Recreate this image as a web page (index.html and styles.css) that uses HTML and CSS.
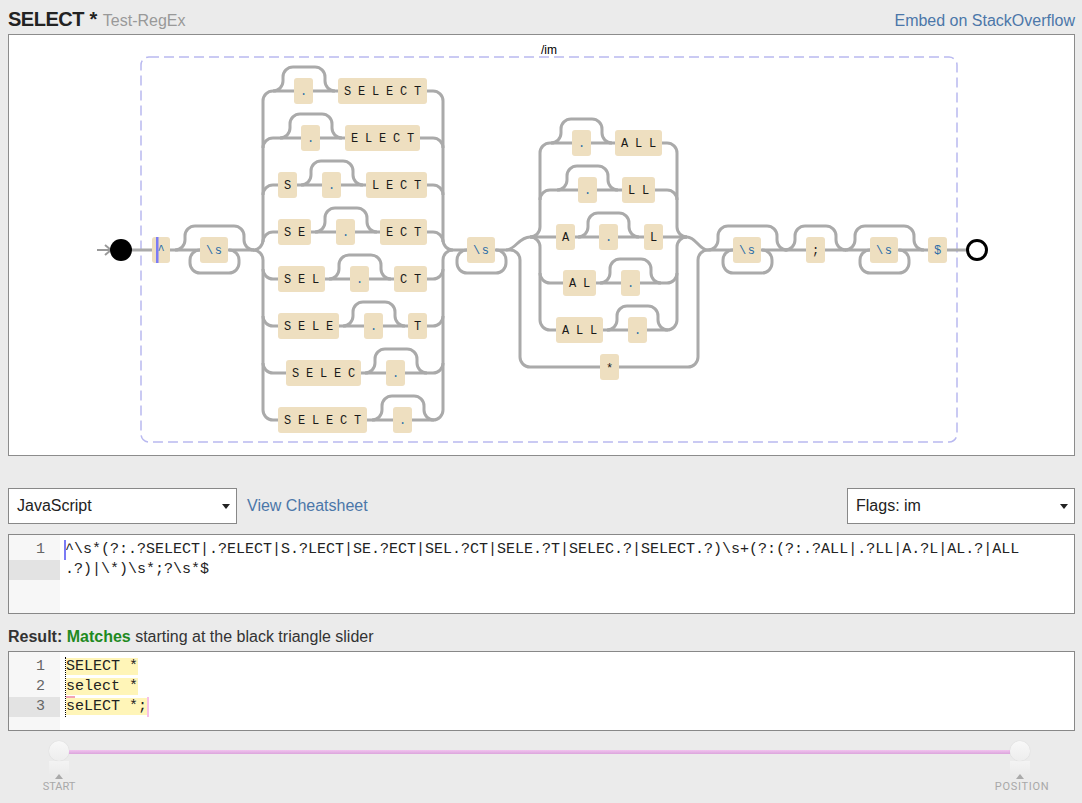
FILE: index.html
```html
<!DOCTYPE html>
<html>
<head>
<meta charset="utf-8">
<title>SELECT * Test-RegEx</title>
<link rel="stylesheet" href="styles.css">
</head>
<body>
<div class="page">
  <header class="top">
    <h1 class="title"><span class="name">SELECT</span> * <span class="sub">Test-RegEx</span></h1>
    <a class="link embed" href="#">Embed on StackOverflow</a>
  </header>

  <div class="diagram">
    <svg width="1065" height="420" viewBox="9 35 1065 420" xmlns="http://www.w3.org/2000/svg">
      <rect class="group" x="141" y="57" width="816" height="385" rx="8"/>
      <text class="glabel" x="549" y="54">/im</text>

      <g class="rail">
        <path class="arrow" d="M97,250 H111"/>
        <path class="arrow" d="M105,245 L111,250 L105,255"/>
        <path d="M131,250 H253"/>
        <path d="M175,250 A10,10 0 0 0 185,240 V236 A10,10 0 0 1 195,226 H234 A10,10 0 0 1 244,236 V240 A10,10 0 0 0 254,250"/>
        <path d="M200,250 A10,10 0 0 0 190,260 V263 A10,10 0 0 0 200,273 H229 A10,10 0 0 0 239,263 V260 A10,10 0 0 0 229,250"/>

        <path d="M253,250 A10,10 0 0 0 263,240 V101 A10,10 0 0 1 273,91"/>
        <path d="M253,250 A10,10 0 0 1 263,260 V410 A10,10 0 0 0 273,420"/>
        <path d="M433,91 A10,10 0 0 1 443,101 V240 A10,10 0 0 0 453,250"/>
        <path d="M433,420 A10,10 0 0 0 443,410 V260 A10,10 0 0 1 453,250"/>
        <path d="M263,148 A10,10 0 0 1 273,138 M263,195 A10,10 0 0 1 273,185 M263,242 A10,10 0 0 1 273,232 M263,269 A10,10 0 0 0 273,279 M263,316 A10,10 0 0 0 273,326 M263,363 A10,10 0 0 0 273,373"/>
        <path d="M433,138 A10,10 0 0 1 443,148 M433,185 A10,10 0 0 1 443,195 M433,232 A10,10 0 0 1 443,242 M433,279 A10,10 0 0 0 443,269 M433,326 A10,10 0 0 0 443,316 M433,373 A10,10 0 0 0 443,363"/>
        <path d="M273,91 H433 M273,138 H433 M273,185 H433 M273,232 H433 M273,279 H433 M273,326 H433 M273,373 H433 M273,420 H433"/>
        <path d="M273,91 A10,10 0 0 0 283,81 V77 A10,10 0 0 1 293,67 H315 A10,10 0 0 1 325,77 V81 A10,10 0 0 0 335,91"/>
        <path d="M280,138 A10,10 0 0 0 290,128 V124 A10,10 0 0 1 300,114 H322 A10,10 0 0 1 332,124 V128 A10,10 0 0 0 342,138"/>
        <path d="M301,185 A10,10 0 0 0 311,175 V171 A10,10 0 0 1 321,161 H343 A10,10 0 0 1 353,171 V175 A10,10 0 0 0 363,185"/>
        <path d="M315,232 A10,10 0 0 0 325,222 V218 A10,10 0 0 1 335,208 H357 A10,10 0 0 1 367,218 V222 A10,10 0 0 0 377,232"/>
        <path d="M329,279 A10,10 0 0 0 339,269 V265 A10,10 0 0 1 349,255 H371 A10,10 0 0 1 381,265 V269 A10,10 0 0 0 391,279"/>
        <path d="M343,326 A10,10 0 0 0 353,316 V312 A10,10 0 0 1 363,302 H385 A10,10 0 0 1 395,312 V316 A10,10 0 0 0 405,326"/>
        <path d="M365,373 A10,10 0 0 0 375,363 V359 A10,10 0 0 1 385,349 H407 A10,10 0 0 1 417,359 V363 A10,10 0 0 0 427,373"/>
        <path d="M372,420 A10,10 0 0 0 382,410 V406 A10,10 0 0 1 392,396 H414 A10,10 0 0 1 424,406 V410 A10,10 0 0 0 434,420"/>

        <path d="M453,250 H510"/>
        <path d="M467,250 A10,10 0 0 0 457,260 V263 A10,10 0 0 0 467,273 H496 A10,10 0 0 0 506,263 V260 A10,10 0 0 0 496,250"/>

        <path d="M506,250 C515,250 519,237 530,237"/>
        <path d="M510,250 A10,10 0 0 1 520,260 V357 A10,10 0 0 0 530,367 H688 A10,10 0 0 0 698,357 V260 A10,10 0 0 1 708,250"/>
        <path d="M530,237 A10,10 0 0 0 540,227 V153 A10,10 0 0 1 550,143"/>
        <path d="M530,237 A10,10 0 0 1 540,247 V320 A10,10 0 0 0 550,330"/>
        <path d="M540,200 A10,10 0 0 1 550,190 M540,273 A10,10 0 0 0 550,283"/>
        <path d="M550,143 H667 M550,190 H667 M530,237 H687 M550,283 H667 M550,330 H667"/>
        <path d="M667,143 A10,10 0 0 1 677,153 V227 A10,10 0 0 0 687,237"/>
        <path d="M667,330 A10,10 0 0 0 677,320 V247 A10,10 0 0 1 687,237"/>
        <path d="M667,190 A10,10 0 0 1 677,200 M667,283 A10,10 0 0 0 677,273"/>
        <path d="M687,237 C696,237 699,250 708,250"/>
        <path d="M551,143 A10,10 0 0 0 561,133 V129 A10,10 0 0 1 571,119 H592 A10,10 0 0 1 602,129 V133 A10,10 0 0 0 612,143"/>
        <path d="M557,190 A10,10 0 0 0 567,180 V176 A10,10 0 0 1 577,166 H598 A10,10 0 0 1 608,176 V180 A10,10 0 0 0 618,190"/>
        <path d="M578,237 A10,10 0 0 0 588,227 V223 A10,10 0 0 1 598,213 H619 A10,10 0 0 1 629,223 V227 A10,10 0 0 0 639,237"/>
        <path d="M600,283 A10,10 0 0 0 610,273 V269 A10,10 0 0 1 620,259 H641 A10,10 0 0 1 651,269 V273 A10,10 0 0 0 661,283"/>
        <path d="M607,330 A10,10 0 0 0 617,320 V316 A10,10 0 0 1 627,306 H648 A10,10 0 0 1 658,316 V320 A10,10 0 0 0 668,330"/>

        <path d="M708,250 H967"/>
        <path d="M708,250 A10,10 0 0 0 718,240 V236 A10,10 0 0 1 728,226 H767 A10,10 0 0 1 777,236 V240 A10,10 0 0 0 787,250"/>
        <path d="M733,250 A10,10 0 0 0 723,260 V263 A10,10 0 0 0 733,273 H762 A10,10 0 0 0 772,263 V260 A10,10 0 0 0 762,250"/>
        <path d="M785,250 A10,10 0 0 0 795,240 V236 A10,10 0 0 1 805,226 H826 A10,10 0 0 1 836,236 V240 A10,10 0 0 0 846,250"/>
        <path d="M845,250 A10,10 0 0 0 855,240 V236 A10,10 0 0 1 865,226 H904 A10,10 0 0 1 914,236 V240 A10,10 0 0 0 924,250"/>
        <path d="M870,250 A10,10 0 0 0 860,260 V263 A10,10 0 0 0 870,273 H899 A10,10 0 0 0 909,263 V260 A10,10 0 0 0 899,250"/>
      </g>

      <circle class="start" cx="121" cy="250" r="11"/>
      <circle class="end" cx="977" cy="250" r="9.5"/>

      <g class="boxes">
        <rect x="152" y="237" width="18" height="26"/>
        <rect x="200" y="237" width="28" height="26"/>
        <rect x="294" y="78" width="19" height="26"/><rect x="338" y="78" width="89" height="26"/>
        <rect x="301" y="125" width="19" height="26"/><rect x="345" y="125" width="75" height="26"/>
        <rect x="278" y="172" width="19" height="26"/><rect x="322" y="172" width="19" height="26"/><rect x="366" y="172" width="61" height="26"/>
        <rect x="278" y="219" width="33" height="26"/><rect x="336" y="219" width="19" height="26"/><rect x="380" y="219" width="47" height="26"/>
        <rect x="278" y="266" width="47" height="26"/><rect x="350" y="266" width="19" height="26"/><rect x="394" y="266" width="33" height="26"/>
        <rect x="278" y="313" width="61" height="26"/><rect x="364" y="313" width="19" height="26"/><rect x="408" y="313" width="19" height="26"/>
        <rect x="286" y="360" width="75" height="26"/><rect x="386" y="360" width="19" height="26"/>
        <rect x="278" y="407" width="89" height="26"/><rect x="393" y="407" width="19" height="26"/>
        <rect x="467" y="237" width="28" height="26"/>
        <rect x="572" y="130" width="19" height="26"/><rect x="615" y="130" width="47" height="26"/>
        <rect x="578" y="177" width="19" height="26"/><rect x="622" y="177" width="33" height="26"/>
        <rect x="556" y="224" width="19" height="26"/><rect x="599" y="224" width="19" height="26"/><rect x="644" y="224" width="19" height="26"/>
        <rect x="563" y="270" width="33" height="26"/><rect x="621" y="270" width="19" height="26"/>
        <rect x="556" y="317" width="47" height="26"/><rect x="628" y="317" width="19" height="26"/>
        <rect x="600" y="354" width="19" height="26"/>
        <rect x="733" y="237" width="28" height="26"/>
        <rect x="806" y="237" width="19" height="26"/>
        <rect x="870" y="237" width="28" height="26"/>
        <rect x="928" y="237" width="19" height="26"/>
      </g>

      <g class="tok">
        <text class="sp" x="157.5" y="254">^</text>
        <text class="sp esc" x="206" y="254">\s</text>
        <text class="sp" x="299.9" y="95">.</text><text class="lit" x="343.9" y="95">SELECT</text>
        <text class="sp" x="306.9" y="142">.</text><text class="lit" x="350.9" y="142">ELECT</text>
        <text class="lit" x="283.9" y="189">S</text><text class="sp" x="327.9" y="189">.</text><text class="lit" x="371.9" y="189">LECT</text>
        <text class="lit" x="283.9" y="236">SE</text><text class="sp" x="341.9" y="236">.</text><text class="lit" x="385.9" y="236">ECT</text>
        <text class="lit" x="283.9" y="283">SEL</text><text class="sp" x="355.9" y="283">.</text><text class="lit" x="399.9" y="283">CT</text>
        <text class="lit" x="283.9" y="330">SELE</text><text class="sp" x="369.9" y="330">.</text><text class="lit" x="413.9" y="330">T</text>
        <text class="lit" x="291.9" y="377">SELEC</text><text class="sp" x="391.9" y="377">.</text>
        <text class="lit" x="283.9" y="424">SELECT</text><text class="sp" x="398.9" y="424">.</text>
        <text class="sp esc" x="473" y="254">\s</text>
        <text class="sp" x="577.9" y="147">.</text><text class="lit" x="620.9" y="147">ALL</text>
        <text class="sp" x="583.9" y="194">.</text><text class="lit" x="627.9" y="194">LL</text>
        <text class="lit" x="561.9" y="241">A</text><text class="sp" x="604.9" y="241">.</text><text class="lit" x="649.9" y="241">L</text>
        <text class="lit" x="568.9" y="287">AL</text><text class="sp" x="626.9" y="287">.</text>
        <text class="lit" x="561.9" y="334">ALL</text><text class="sp" x="633.9" y="334">.</text>
        <text class="lit" x="605.9" y="372">*</text>
        <text class="sp esc" x="739" y="254">\s</text>
        <text class="lit" x="811.9" y="254">;</text>
        <text class="sp esc" x="876" y="254">\s</text>
        <text class="sp" x="933.9" y="254">$</text>
      </g>
      <rect class="caret" x="156" y="237" width="2.5" height="26"/>
    </svg>
  </div>

  <div class="controls">
    <div class="select"><span>JavaScript</span><span class="caret-down"></span></div>
    <a class="link cheat" href="#">View Cheatsheet</a>
    <div class="select flags"><span>Flags: im</span><span class="caret-down"></span></div>
  </div>

  <div class="editor">
    <div class="gutter">
      <div class="ln">1</div>
      <div class="ln active"></div>
    </div>
    <div class="code">
      <div class="row"><span class="cursor"></span>^\s*(?:.?SELECT|.?ELECT|S.?LECT|SE.?ECT|SEL.?CT|SELE.?T|SELEC.?|SELECT.?)\s+(?:(?:.?ALL|.?LL|A.?L|AL.?|ALL</div>
      <div class="row">.?)|\*)\s*;?\s*$</div>
    </div>
  </div>

  <div class="result-label"><b>Result:</b> <b class="ok">Matches</b> starting at the black triangle slider</div>

  <div class="editor result">
    <div class="gutter">
      <div class="ln">1</div>
      <div class="ln">2</div>
      <div class="ln active">3</div>
    </div>
    <div class="code">
      <div class="lines">
        <div class="row"><span class="hl">SELECT *</span></div>
        <div class="row"><span class="hl"><span class="squig">s</span>elect *</span></div>
        <div class="row"><span class="hl">seLECT *;</span><span class="endmark"></span></div>
      </div>
    </div>
  </div>

  <div class="slider">
    <div class="knob-col">
      <span class="knob"></span>
      <span class="stem"></span>
      <span class="tri"></span>
      <span class="lbl">START</span>
    </div>
    <div class="track"></div>
    <div class="knob-col">
      <span class="knob"></span>
      <span class="stem"></span>
      <span class="tri"></span>
      <span class="lbl wide">POSITION</span>
    </div>
  </div>
</div>
</body>
</html>
```

FILE: styles.css
```css
* { box-sizing: border-box; }

body {
  margin: 0;
  background: #ebebeb;
  font-family: "Liberation Sans", Arial, sans-serif;
  color: #222;
}

.page {
  width: 1067px;
  margin-left: 8px;
}

.top {
  height: 34px;
  padding-top: 9px;
  display: flex;
  justify-content: space-between;
  align-items: baseline;
  line-height: 20px;
}

.title {
  margin: 0;
  font-size: 20px;
  font-weight: bold;
  color: #222;
}

.name { letter-spacing: -0.5px; }

.sub {
  font-size: 16px;
  font-weight: normal;
  color: #999;
}

.link {
  color: #4b77a9;
  font-size: 16px;
  text-decoration: none;
}

.diagram {
  height: 422px;
  background: #fff;
  border: 1px solid #8c8c8c;
}

.diagram svg { display: block; }

.group {
  fill: none;
  stroke: #b9b9f0;
  stroke-width: 1.5;
  stroke-dasharray: 10 5;
}

.glabel {
  font-family: "Liberation Sans", Arial, sans-serif;
  font-size: 12px;
  fill: #000;
  text-anchor: middle;
}

.rail path {
  fill: none;
  stroke: #aaaaaa;
  stroke-width: 3;
}

.rail path.arrow {
  stroke: #999;
  stroke-width: 2;
}

.start { fill: #000; }

.end {
  fill: #fff;
  stroke: #000;
  stroke-width: 3;
}

.boxes rect {
  fill: #eedfc0;
  rx: 3px;
  ry: 3px;
}

.tok text {
  font-family: "Liberation Mono", "Courier New", monospace;
  font-size: 12px;
  letter-spacing: 6.8px;
}

.tok .lit { fill: #1a1a1a; }
.tok .sp { fill: #2b6da8; }
.tok .esc { letter-spacing: 1.5px; }

.caret { fill: #7b7bf5; }

.controls {
  margin-top: 32px;
  height: 36px;
  display: flex;
  align-items: center;
}

.select {
  width: 229px;
  height: 36px;
  border: 1px solid #888;
  background: #fff;
  display: flex;
  align-items: center;
  justify-content: space-between;
  padding: 0 6px 0 8px;
  font-size: 16px;
  color: #222;
}

.caret-down {
  width: 0;
  height: 0;
  border-left: 4px solid transparent;
  border-right: 4px solid transparent;
  border-top: 5px solid #222;
}

.cheat { margin-left: 10px; }

.flags {
  margin-left: auto;
  width: 228px;
}

.editor {
  margin-top: 10px;
  height: 80px;
  border: 1px solid #888;
  background: #fff;
  display: flex;
}

.gutter {
  width: 51px;
  flex: none;
  background: #f7f7f7;
  padding-top: 5px;
}

.ln {
  height: 20px;
  line-height: 20px;
  font-family: "Liberation Mono", "Courier New", monospace;
  font-size: 15px;
  color: #666;
  text-align: right;
  padding-right: 15px;
}

.ln.active { background: #e3e3e3; }

.code {
  padding: 5px 0 0 5px;
  font-family: "Liberation Mono", "Courier New", monospace;
  font-size: 15px;
  line-height: 20px;
  color: #222;
}

.row {
  position: relative;
  height: 20px;
  white-space: pre;
}

.cursor {
  position: absolute;
  left: -1px;
  top: 0;
  width: 2px;
  height: 20px;
  background: #7b7bf5;
}

.result-label {
  margin-top: 13px;
  font-size: 16px;
  line-height: 20px;
  color: #333;
}

.result-label .ok { color: #1f8a1f; }

.result { margin-top: 4px; }

.lines {
  border-left: 1px dotted #000;
}

.hl { background: #fff5b8; }

.squig { position: relative; }

.squig::after {
  content: "";
  position: absolute;
  left: 0;
  right: 0;
  bottom: -3px;
  height: 2px;
  background: #f2a3b4;
}

.endmark {
  display: inline-block;
  width: 2px;
  height: 20px;
  vertical-align: top;
  background: #f7c0e6;
}

.slider {
  height: 72px;
  display: flex;
  align-items: flex-start;
  padding: 10px 45px 0 41px;
}

.knob-col {
  width: 20px;
  flex: none;
  display: flex;
  flex-direction: column;
  align-items: center;
}

.knob {
  width: 20px;
  height: 20px;
  border-radius: 50%;
  background: linear-gradient(#f8f8f8, #ededed);
  box-shadow: 0 0 1px rgba(0, 0, 0, 0.18);
}

.stem {
  width: 20px;
  height: 13px;
  background: linear-gradient(rgba(255, 255, 255, 0.4), rgba(255, 255, 255, 0.05));
}

.tri {
  width: 0;
  height: 0;
  border-left: 4px solid transparent;
  border-right: 4px solid transparent;
  border-bottom: 5px solid #aaa;
}

.lbl {
  margin-top: 2px;
  font-family: Roboto, "Liberation Sans", sans-serif;
  font-size: 11px;
  line-height: 12px;
  color: #a8a8a8;
  white-space: nowrap;
}

.lbl.wide {
  letter-spacing: 0.7px;
  margin-left: 4px;
}

.track {
  flex: 1;
  height: 4px;
  margin-top: 9px;
  background: linear-gradient(#f1c3ef, #dba5dc);
}
```
